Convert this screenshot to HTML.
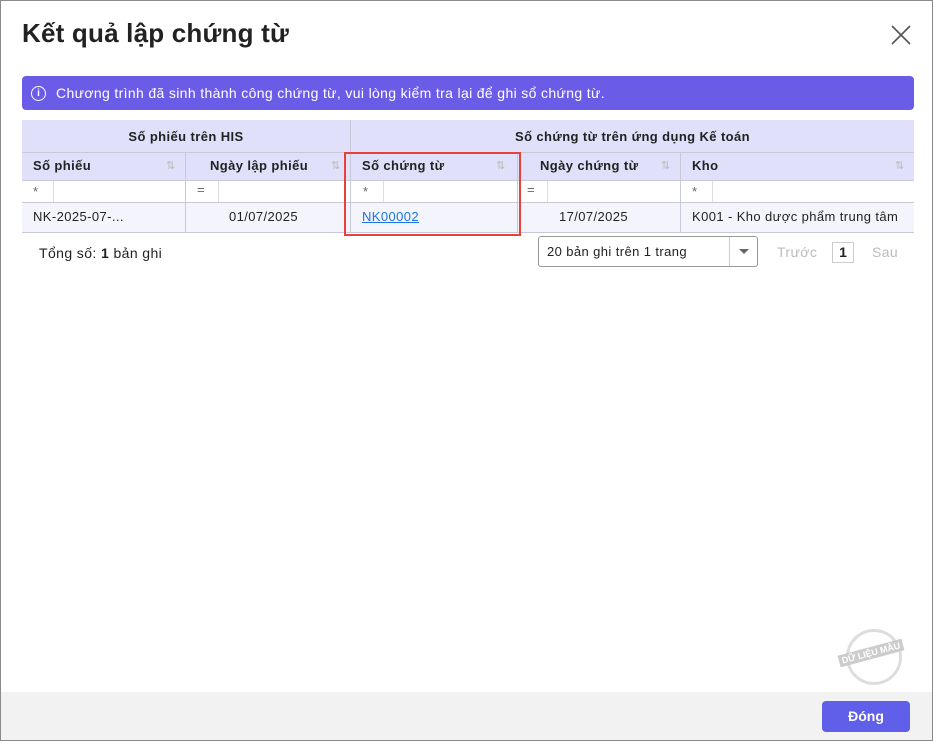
<!DOCTYPE html>
<html><head><meta charset="utf-8"><style>
*{box-sizing:border-box;margin:0;padding:0}
body{width:933px;height:741px;background:#fff;font-family:"Liberation Sans",sans-serif;position:relative;overflow:hidden;color:#222}
.frame{position:absolute;left:0;top:0;width:933px;height:741px;border:1px solid #8a8a8a}
h1{position:absolute;left:22px;top:18px;font-size:26px;font-weight:bold;color:#222;letter-spacing:0.2px}
.banner{position:absolute;left:22px;top:76px;width:892px;height:34px;background:#6b5ce7;border-radius:4px;color:#fff;font-size:14px;line-height:34px;padding-left:34px;letter-spacing:0.35px}
.banner .i{position:absolute;left:9px;top:10px;width:15px;height:15px;border:1.3px solid #fff;border-radius:50%;font-size:10px;line-height:13px;text-align:center;font-weight:bold;letter-spacing:0}
.c{position:absolute;font-size:13px;white-space:nowrap;letter-spacing:0.4px}
.hd{background:#e0e0fa}
.bl{position:absolute;background:#c8c8d8}
.sort{position:absolute;color:#bbb;font-size:11px}
</style></head><body>
<div class="frame"></div>
<h1>Kết quả lập chứng từ</h1>
<svg style="position:absolute;left:891px;top:25px" width="20" height="20"><path d="M1 1L19 19M19 1L1 19" stroke="#555" stroke-width="1.6"/></svg>
<div class="banner"><span class="i">i</span>Chương trình đã sinh thành công chứng từ, vui lòng kiểm tra lại để ghi sổ chứng từ.</div>

<div class="hd" style="position:absolute;left:22px;top:120px;width:892px;height:60px"></div>
<div style="position:absolute;left:22px;top:202px;width:892px;height:30px;background:#f4f5fc"></div>
<div class="bl" style="left:22px;top:152px;width:892px;height:1px"></div>
<div class="bl" style="left:22px;top:180px;width:892px;height:1px"></div>
<div class="bl" style="left:22px;top:202px;width:892px;height:1px"></div>
<div class="bl" style="left:22px;top:232px;width:892px;height:1px"></div>
<div class="bl" style="left:350px;top:120px;width:1px;height:112px"></div>
<div class="bl" style="left:185px;top:152px;width:1px;height:80px"></div>
<div class="bl" style="left:517px;top:152px;width:1px;height:80px"></div>
<div class="bl" style="left:680px;top:152px;width:1px;height:80px"></div>
<div class="bl" style="left:53px;top:181px;width:1px;height:21px;background:#ddd"></div>
<div class="bl" style="left:218px;top:181px;width:1px;height:21px;background:#ddd"></div>
<div class="bl" style="left:383px;top:181px;width:1px;height:21px;background:#ddd"></div>
<div class="bl" style="left:547px;top:181px;width:1px;height:21px;background:#ddd"></div>
<div class="bl" style="left:712px;top:181px;width:1px;height:21px;background:#ddd"></div>

<div class="c" style="left:22px;width:328px;text-align:center;top:129px;font-weight:bold">Số phiếu trên HIS</div>
<div class="c" style="left:351px;width:563px;text-align:center;top:129px;font-weight:bold">Số chứng từ trên ứng dụng Kế toán</div>
<div class="c" style="left:33px;top:158px;font-weight:bold">Số phiếu</div>
<div class="c" style="left:210px;top:158px;font-weight:bold">Ngày lập phiếu</div>
<div class="c" style="left:362px;top:158px;font-weight:bold">Số chứng từ</div>
<div class="c" style="left:540px;top:158px;font-weight:bold">Ngày chứng từ</div>
<div class="c" style="left:692px;top:158px;font-weight:bold">Kho</div>
<div class="sort" style="left:166px;top:159px">⇅</div>
<div class="sort" style="left:331px;top:159px">⇅</div>
<div class="sort" style="left:496px;top:159px">⇅</div>
<div class="sort" style="left:661px;top:159px">⇅</div>
<div class="sort" style="left:895px;top:159px">⇅</div>
<div class="c" style="left:33px;top:184px;color:#666">*</div>
<div class="c" style="left:197px;top:182px;color:#666">=</div>
<div class="c" style="left:363px;top:184px;color:#666">*</div>
<div class="c" style="left:527px;top:182px;color:#666">=</div>
<div class="c" style="left:692px;top:184px;color:#666">*</div>
<div class="c" style="left:33px;top:209px">NK-2025-07-...</div>
<div class="c" style="left:229px;top:209px">01/07/2025</div>
<div class="c" style="left:362px;top:209px;color:#1a73e8;text-decoration:underline">NK00002</div>
<div class="c" style="left:559px;top:209px">17/07/2025</div>
<div class="c" style="left:692px;top:209px">K001 - Kho dược phẩm trung tâm</div>
<div style="position:absolute;left:344px;top:152px;width:177px;height:84px;border:2px solid #e8413c"></div>

<div class="c" style="left:39px;top:245px;font-size:14px">Tổng số: <b>1</b> bản ghi</div>
<div style="position:absolute;left:538px;top:236px;width:220px;height:31px;border:1px solid #999;border-radius:3px;font-size:13px;line-height:29px;padding-left:8px;letter-spacing:0.4px">20 bản ghi trên 1 trang<div style="position:absolute;right:0;top:0;width:28px;height:29px;border-left:1px solid #ccc"><div style="position:absolute;left:9px;top:12px;border:5px solid transparent;border-top:5px solid #666"></div></div></div>
<div class="c" style="left:777px;top:244px;color:#bbb;font-size:14px">Trước</div>
<div style="position:absolute;left:832px;top:242px;width:22px;height:21px;border:1px solid #ccc;font-size:14px;font-weight:bold;text-align:center;line-height:19px">1</div>
<div class="c" style="left:872px;top:244px;color:#bbb;font-size:14px">Sau</div>

<div style="position:absolute;left:846px;top:629px;width:56px;height:56px;border:3px solid #ddd;border-radius:50%"></div>
<div style="position:absolute;left:838px;top:647px;transform:rotate(-15deg);background:#ccc;color:#fff;font-size:9px;font-weight:bold;padding:1px 3px">DỮ LIỆU MẪU</div>

<div style="position:absolute;left:1px;top:692px;width:931px;height:48px;background:#f2f2f2"></div>
<div style="position:absolute;left:822px;top:701px;width:88px;height:31px;background:#5f5fea;border-radius:4px;color:#fff;font-weight:bold;font-size:14px;text-align:center;line-height:31px">Đóng</div>
</body></html>
